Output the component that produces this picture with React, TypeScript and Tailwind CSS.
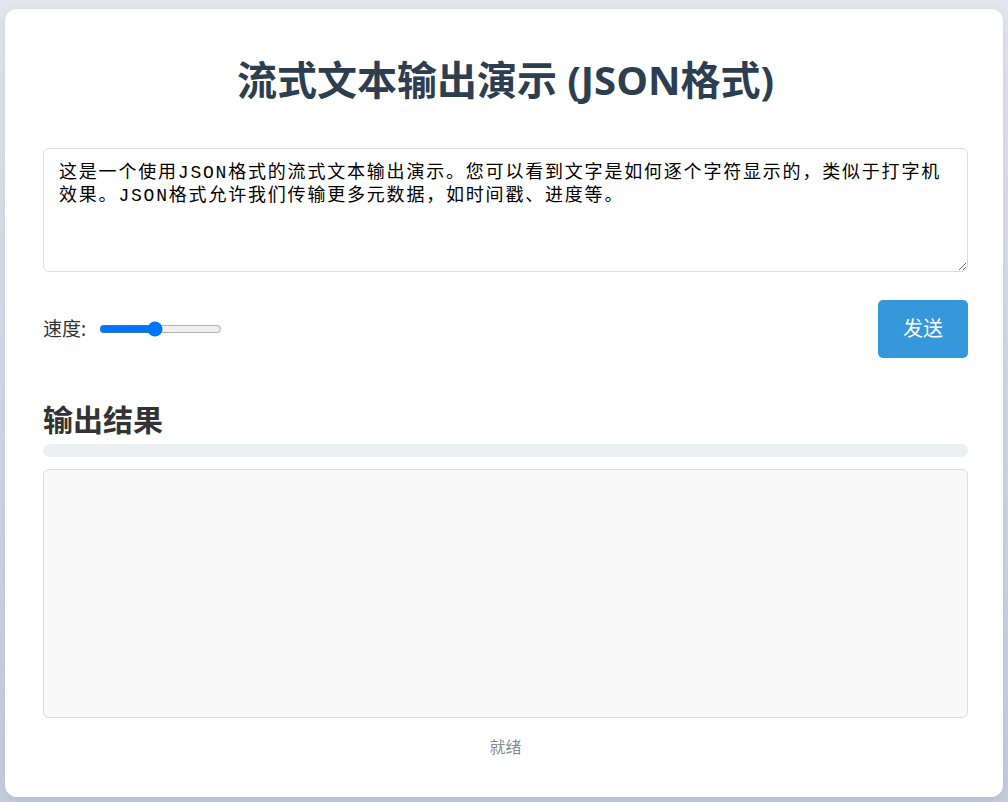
import React, { useState } from 'react';

const sampleText =
  '这是一个使用JSON格式的流式文本输出演示。您可以看到文字是如何逐个字符显示的，类似于打字机效果。JSON格式允许我们传输更多元数据，如时间戳、进度等。';

export default function StreamDemo() {
  const [text, setText] = useState(sampleText);
  const [speed, setSpeed] = useState(45);

  return (
    <div className="min-h-screen bg-gradient-to-b from-[#e4e7ef] to-[#c6cfdd] pt-[9px] pb-[5px] pl-[5px] pr-[5px] font-['Noto_Sans','Noto_Sans_CJK_SC',sans-serif]">
      <div className="w-[998px] rounded-xl bg-white pt-[46px] pb-[38px] pl-[38px] pr-[35px] shadow-[0_4px_14px_rgba(60,80,120,0.14)]">
        {/* Title */}
        <h1 className="text-center text-[40px] leading-[50px] font-bold text-[#2c3e50] font-['Open_Sans','Noto_Sans_CJK_SC',sans-serif]">
          流式文本输出演示 (JSON格式)
        </h1>

        {/* Input */}
        <textarea
          value={text}
          onChange={(e) => setText(e.target.value)}
          className="mt-[43px] block w-full h-[124px] rounded-md border border-[#dddddd] px-[15px] py-[13px] text-[18px] leading-[23px] tracking-[1.8px] text-black outline-none resize-y font-['Liberation_Mono','Noto_Sans_CJK_SC',monospace]"
        />

        {/* Controls */}
        <div className="mt-[28px] flex items-center justify-between">
          <div className="flex items-center gap-[13px]">
            <label className="text-[19px] text-[#333333]">速度:</label>
            <input
              type="range"
              min={0}
              max={100}
              value={speed}
              onChange={(e) => setSpeed(Number(e.target.value))}
              className="w-[123px]"
            />
          </div>
          <button className="h-[58px] w-[90px] rounded-[5px] bg-[#3498db] text-[20px] text-white hover:bg-[#2980b9]">
            发送
          </button>
        </div>

        {/* Output */}
        <h2 className="mt-[44px] text-[30px] leading-[36px] font-bold text-[#333333]">输出结果</h2>
        <div className="mt-[6px] h-[13px] w-full rounded-full bg-[#ecf0f1]" />
        <div className="mt-[12px] h-[249px] w-full rounded-md border border-[#dddddd] bg-[#f9f9f9]" />
        <div className="mt-[17px] text-center text-[16px] leading-[24px] text-[#7f8c8d]">就绪</div>
      </div>
    </div>
  );
}
